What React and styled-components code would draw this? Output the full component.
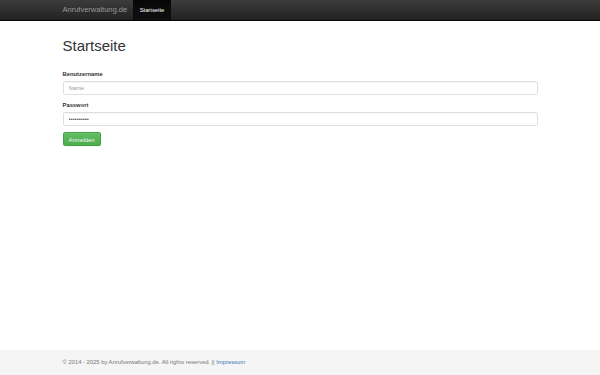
import React from 'react';
import styled, { createGlobalStyle } from 'styled-components';

const GlobalStyle = createGlobalStyle`
  html, body {
    margin: 0;
    padding: 0;
    height: 100%;
  }
  body {
    font-family: "Liberation Sans", Helvetica, Arial, sans-serif;
    font-size: 5.83px;
    line-height: 8.33px;
    color: #333;
    background: #fff;
  }
  * {
    box-sizing: border-box;
  }
`;

const Page = styled.div`
  display: flex;
  flex-direction: column;
  min-height: 100vh;
`;

const Container = styled.div`
  width: 100%;
  max-width: 487.5px;
  margin: 0 auto;
  padding: 0 6.25px;
`;

const Navbar = styled.nav`
  background-image: linear-gradient(to bottom, #3c3c3c 0%, #222 100%);
  border-bottom: 0.5px solid #080808;
  height: 21.25px;
  margin-bottom: 8.33px;
`;

const NavInner = styled(Container)`
  display: flex;
  align-items: stretch;
  height: 100%;
`;

const Brand = styled.a`
  display: flex;
  align-items: center;
  padding: 0 6.25px;
  margin-left: -6.25px;
  font-size: 7.5px;
  color: #9d9d9d;
  text-decoration: none;
  text-shadow: 0 0.4px 0 rgba(0, 0, 0, 0.25);
`;

const NavItem = styled.a`
  display: flex;
  align-items: center;
  padding: 0 6.25px;
  font-size: 5.83px;
  text-decoration: none;
  color: ${(p) => (p.$active ? '#fff' : '#9d9d9d')};
  background-image: ${(p) =>
    p.$active ? 'linear-gradient(to bottom, #080808 0%, #0f0f0f 100%)' : 'none'};
  box-shadow: ${(p) => (p.$active ? 'inset 0 1.25px 3.75px rgba(0, 0, 0, 0.25)' : 'none')};
`;

const Main = styled(Container)`
  padding-top: 8.33px;
`;

const Title = styled.h1`
  margin: 0 0 4.17px;
  font-size: 15px;
  line-height: 16.5px;
  font-weight: 500;
  color: #333;
`;

const Form = styled.form`
  margin-top: 16px;
`;

const FormGroup = styled.div`
  margin-bottom: 6.25px;
`;

const Label = styled.label`
  display: block;
  margin-bottom: 2.08px;
  font-weight: bold;
  font-size: 5.83px;
  line-height: 8.33px;
`;

const Input = styled.input`
  display: block;
  width: 100%;
  height: 14.17px;
  padding: 2.5px 5px;
  font-family: inherit;
  font-size: 5.83px;
  line-height: 8.33px;
  color: #555;
  background: #fff;
  border: 1px solid #dedede;
  border-radius: 1.67px;
  box-shadow: inset 0 0.4px 0.4px rgba(0, 0, 0, 0.075);
  outline: none;

  &::placeholder {
    color: #999;
  }
`;

const Button = styled.button`
  display: inline-block;
  height: 14.17px;
  padding: 2.5px 5px;
  font-family: inherit;
  font-size: 5.83px;
  line-height: 8.33px;
  color: #fff;
  background-image: linear-gradient(to bottom, #62bd62 0%, #4cae4c 100%);
  border: 0.5px solid #45a045;
  border-radius: 1.67px;
  text-shadow: 0 -0.4px 0 rgba(0, 0, 0, 0.2);
  box-shadow: inset 0 0.4px 0 rgba(255, 255, 255, 0.15), 0 0.4px 0.4px rgba(0, 0, 0, 0.075);
  cursor: pointer;
`;

const Footer = styled.footer`
  margin-top: auto;
  height: 25px;
  background: #f5f5f5;
`;

const FooterText = styled.p`
  margin: 8.33px 0;
  color: #777;
  font-size: 5.83px;
  line-height: 8.33px;
`;

const Link = styled.a`
  color: #337ab7;
  text-decoration: none;
`;

const App = () => (
  <Page>
    <GlobalStyle />
    <Navbar>
      <NavInner>
        <Brand href="#">Anrufverwaltung.de</Brand>
        <NavItem href="#" $active>
          Startseite
        </NavItem>
      </NavInner>
    </Navbar>
    <Main>
      <Title>Startseite</Title>
      <Form onSubmit={(e) => e.preventDefault()}>
        <FormGroup>
          <Label htmlFor="user">Benutzername</Label>
          <Input id="user" type="text" placeholder="Name" />
        </FormGroup>
        <FormGroup>
          <Label htmlFor="pass">Passwort</Label>
          <Input id="pass" type="password" defaultValue="xxxxxxxxxx" />
        </FormGroup>
        <Button type="submit">Anmelden</Button>
      </Form>
    </Main>
    <Footer>
      <Container>
        <FooterText>
          © 2014 - 2025 by Anrufverwaltung.de. All rights reserved. || <Link href="#">Impressum</Link>
        </FooterText>
      </Container>
    </Footer>
  </Page>
);

export default App;
